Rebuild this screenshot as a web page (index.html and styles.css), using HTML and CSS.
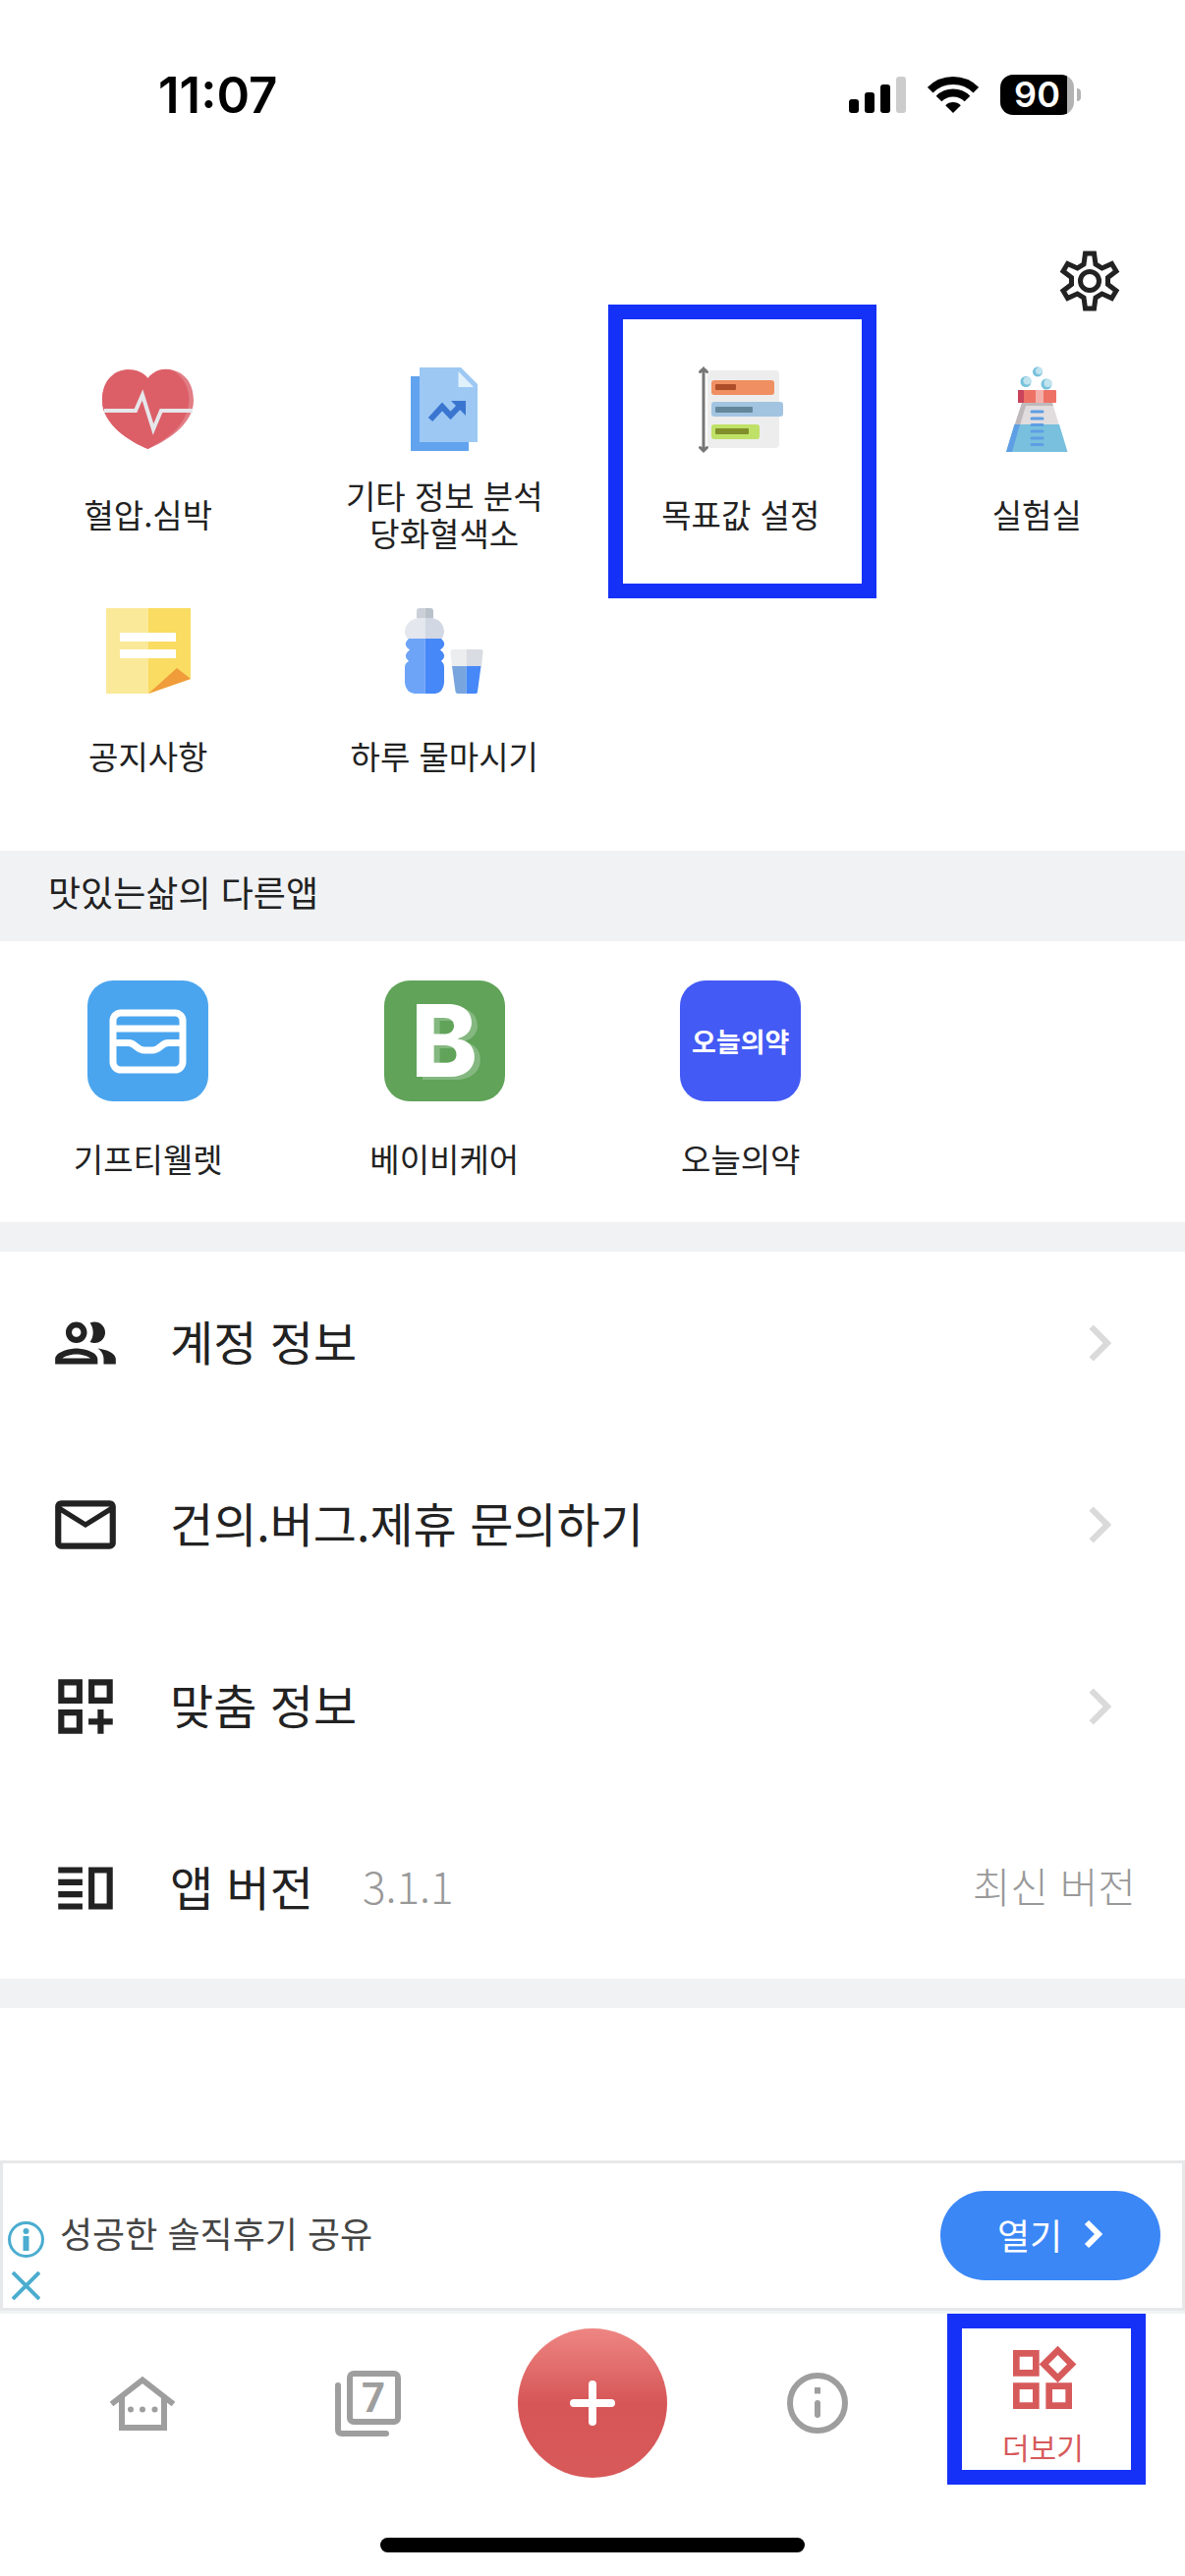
FILE: index.html
```html
<!DOCTYPE html>
<html lang="ko">
<head>
    <meta charset="UTF-8">
    <meta name="viewport" content="width=device-width, initial-scale=1.0">
    <title>더보기</title>
    <link rel="stylesheet" href="styles.css">
</head>
<body>
    <div class="app">
        <!-- Status bar -->
        <div class="status-bar">
            <span class="time">11:07</span>
            <div class="status-icons">
                <svg width="58" height="37" viewBox="0 0 58 37">
                    <rect x="0" y="23" width="10" height="14" rx="3"/>
                    <rect x="16" y="16" width="10" height="21" rx="3"/>
                    <rect x="32" y="8" width="10" height="29" rx="3"/>
                    <rect x="48" y="0" width="10" height="37" rx="3" fill="#cccccc"/>
                </svg>
                <svg width="52" height="37" viewBox="0 0 52 37">
                    <path d="M2.7 13.7A33 33 0 0 1 49.3 13.7" fill="none" stroke="#000" stroke-width="8"/>
                    <path d="M11.5 22.5A20.5 20.5 0 0 1 40.5 22.5" fill="none" stroke="#000" stroke-width="8"/>
                    <path d="M26 37L18.2 29.2A11 11 0 0 1 33.8 29.2Z"/>
                </svg>
                <div class="battery">
                    <span class="battery-level">90</span>
                    <span class="battery-tip"></span>
                </div>
            </div>
        </div>

        <header class="top-actions">
            <button type="button" class="icon-btn" aria-label="설정">
                <svg class="icon" viewBox="0 0 74 74" fill="none">
                    <g fill="none" stroke="currentColor" stroke-width="5">
                        <path d="M32.500 9H41.500L43 20 49.500 24 59.500 19.500 64 27 55.500 33.500V40.500L64 47 59.500 54.500 49.500 50 43 54 41.500 65H32.500L31 54 24.500 50 14.500 54.500 10 47 18.500 40.500V33.500L10 27 14.500 19.500 24.500 24 31 20z"/>
                        <circle cx="37" cy="37" r="9.500"/>
                    </g>
                </svg>
            </button>
        </header>

        <main>
            <nav class="menu-grid">
                <a href="#" class="menu-item">
                    <svg width="96" height="96" viewBox="0 0 96 96">
                        <path fill="#e27d85" d="M47.500 16C59 1 94 3 94 39 94 63 65 81 47.500 88 30 81 1 63 1 39 1 3 36 1 47.500 16z"/>
                        <path fill="#dc5f68" d="M47.500 16C54 8 63 5 73 8 98 24 96 62 56 83L47.500 88C30 81 1 63 1 39 1 3 36 1 47.500 16z"/>
                        <path fill="none" stroke="#e6e7ea" stroke-width="4" d="M3 49H35L42 33 53 68 61 49H93"/>
                    </svg>
                    <span class="menu-label">혈압.심박</span>
                </a>
                <a href="#" class="menu-item">
                    <svg width="96" height="96" viewBox="0 0 96 96">
                        <path fill="#61a3ef" d="M14 14H73V90H14z"/>
                        <path fill="#9dc8f4" d="M23 5H65L82 22V81H23z"/>
                        <path fill="#e0f1fc" d="M62.500 9L78 25H62.500z"/>
                        <path fill="none" stroke="#3a76d0" stroke-width="6" d="M34 58L46 45 54.500 54 65 43"/>
                        <path fill="#3a76d0" d="M55 39H70V54z"/>
                    </svg>
                    <span class="menu-label">기타 정보 분석<br>당화혈색소</span>
                </a>
                <a href="#" class="menu-item marked">
                    <svg width="96" height="96" viewBox="0 0 96 96">
                        <rect x="14" y="8" width="73" height="79" rx="4" fill="#ededed"/>
                        <rect x="18" y="18" width="64" height="15" rx="3" fill="#f08f62"/>
                        <rect x="22" y="22" width="21" height="6" rx="1" fill="#ae4e29"/>
                        <rect x="18" y="40" width="73" height="15" rx="3" fill="#a2c4e1"/>
                        <rect x="22" y="45" width="38" height="6" rx="1" fill="#62879a"/>
                        <rect x="18" y="63" width="49" height="15" rx="3" fill="#bfe168"/>
                        <rect x="22" y="67" width="34" height="6" rx="1" fill="#808e2b"/>
                        <path fill="none" stroke="#767676" stroke-width="3" stroke-linecap="round" d="M10 6V90M6.500 9.500L10 6 13.500 9.500M6.500 86.500L10 90 13.500 86.500"/>
                    </svg>
                    <span class="menu-label">목표값 설정</span>
                </a>
                <a href="#" class="menu-item">
                    <svg width="96" height="96" viewBox="0 0 96 96">
                        <circle cx="37" cy="19.500" r="5.500" fill="#78c2dc"/><circle cx="38.500" cy="18.500" r="4" fill="#bfe3ef"/>
                        <circle cx="49" cy="9.500" r="5" fill="#78c2dc"/><circle cx="50.500" cy="8.500" r="3.500" fill="#bfe3ef"/>
                        <circle cx="58" cy="22" r="5.500" fill="#78c2dc"/><circle cx="59.500" cy="21" r="4" fill="#bfe3ef"/>
                        <path fill="#e1dddf" d="M33 41H64L71 64H25.500z"/>
                        <path fill="#bfb9bc" d="M33 41H64L65 44H37L31 64H25.500z"/>
                        <path fill="#78c0dd" d="M25.500 63H71L79.500 91H17z"/>
                        <path fill="#5e9ee4" d="M25.500 63H31L23 91H17z"/>
                        <rect x="29" y="28" width="39" height="13" rx="1" fill="#ee7165"/>
                        <path fill="#c9435b" d="M29 28H35V41H29z"/>
                        <path fill="#f3b0aa" d="M47 28H55V41H47z"/>
                        <path stroke="#5e9ee4" stroke-width="3" stroke-linecap="round" d="M43 50H54M43 57H54M43 63.500H54M43 70H54M43 77H54M43 83.500H54"/>
                    </svg>
                    <span class="menu-label">실험실</span>
                </a>
                <a href="#" class="menu-item">
                    <svg width="96" height="96" viewBox="0 0 96 96">
                        <path fill="#fbe99a" d="M5 4H48V91H5z"/>
                        <path fill="#f9dc61" d="M48 4H91V76L48 91z"/>
                        <path fill="#f09c3b" d="M48 91L77 65 91 76z"/>
                        <path fill="#fff" d="M19 29H76V38H19zM19 46H76V55H19z"/>
                    </svg>
                    <span class="menu-label">공지사항</span>
                </a>
                <a href="#" class="menu-item">
                    <svg width="96" height="96" viewBox="0 0 96 96">
                        <path fill="#cbd0d8" d="M20 14V7Q20 4 23 4H28.500V14z"/>
                        <path fill="#b9c2ca" d="M28.500 4H34Q37 4 37 7V14H28.500z"/>
                        <path fill="#e4e7ed" d="M28.500 14H21C12 16 8 22 8 29Q9 34 12 36H28.500z"/>
                        <path fill="#d2d8e3" d="M28.500 14H36C45 16 48 22 48 29Q47 34 45 36H28.500z"/>
                        <path fill="#6ea4f8" d="M28.500 35H12Q5 41 13 46.500 5 52 12 58 8 60 8 64V80Q9 90 18 91H28.500z"/>
                        <path fill="#4688f7" d="M28.500 35H45Q52 41 44 46.500 52 52 45 58 48 60 48 64V80Q47 90 39 91H28.500z"/>
                        <path fill="#ebedef" d="M70.500 46H57Q54 46 54.500 49L56 63H70.500z"/>
                        <path fill="#d9dce2" d="M70.500 46H85Q88 46 87.500 49L86 63H70.500z"/>
                        <path fill="#79a5de" d="M56 63H70.500V91H62Q60 91 59.500 89z"/>
                        <path fill="#4688f7" d="M70.500 63H85.500L82 89Q82 91 80 91H70.500z"/>
                    </svg>
                    <span class="menu-label">하루 물마시기</span>
                </a>
            </nav>

            <section>
                <h2 class="section-title">맛있는삶의 다른앱</h2>
                <div class="app-grid">
                    <a href="#" class="app-item">
                        <svg class="app-icon wallet" viewBox="0 0 123 123" fill="none" stroke="#fff" stroke-width="7">
                            <rect x="26" y="33" width="71" height="58" rx="8"/>
                            <path d="M26 49H97M26 63.500H42C49 63.500 50 71 58 71H66C74 71 75 63.500 82 63.500H97"/>
                        </svg>
                        <span>기프티웰렛</span>
                    </a>
                    <a href="#" class="app-item">
                        <span class="app-icon baby">B</span>
                        <span>베이비케어</span>
                    </a>
                    <a href="#" class="app-item">
                        <span class="app-icon medicine">오늘의약</span>
                        <span>오늘의약</span>
                    </a>
                </div>
            </section>

            <ul class="settings">
                <li>
                    <a href="#" class="row">
                        <svg class="icon" viewBox="0 0 24 24"><path d="M9 13.750c-2.340 0-7 1.170-7 3.500V19h14v-1.750c0-2.330-4.660-3.500-7-3.500zM4.340 17c.84-.58 2.870-1.250 4.660-1.250s3.820.67 4.660 1.250H4.340zM9 12c1.930 0 3.500-1.570 3.500-3.500S10.930 5 9 5 5.500 6.570 5.500 8.500 7.070 12 9 12zm0-5c.83 0 1.500.67 1.500 1.500S9.830 10 9 10s-1.500-.67-1.500-1.500S8.170 7 9 7zm7.040 6.810c1.160.84 1.960 1.960 1.960 3.440V19h4v-1.750c0-2.020-3.500-3.170-5.960-3.440zM15 12c1.930 0 3.500-1.570 3.500-3.500S16.930 5 15 5c-.54 0-1.040.13-1.500.35.63.89 1 1.980 1 3.150s-.37 2.260-1 3.150c.46.22.96.35 1.500.35z"/></svg>
                        <span class="row-title">계정 정보</span>
                        <svg class="icon chevron" viewBox="0 0 24 24"><path d="M10 6L8.590 7.410 13.170 12l-4.580 4.590L10 18l6-6z"/></svg>
                    </a>
                </li>
                <li>
                    <a href="#" class="row">
                        <svg class="icon" viewBox="0 0 24 24"><path d="M22 6c0-1.100-.9-2-2-2H4c-1.100 0-2 .9-2 2v12c0 1.100.9 2 2 2h16c1.100 0 2-.9 2-2V6zm-2 0l-8 5-8-5h16zm0 12H4V8l8 5 8-5v10z"/></svg>
                        <span class="row-title">건의.버그.제휴 문의하기</span>
                        <svg class="icon chevron" viewBox="0 0 24 24"><path d="M10 6L8.590 7.410 13.170 12l-4.580 4.590L10 18l6-6z"/></svg>
                    </a>
                </li>
                <li>
                    <a href="#" class="row">
                        <svg class="icon" viewBox="0 0 24 24"><path d="M3 11h8V3H3v8zm2-6h4v4H5V5zm8-2v8h8V3h-8zm6 6h-4V5h4v4zM3 21h8v-8H3v8zm2-6h4v4H5v-4zm13-2h-2v3h-3v2h3v3h2v-3h3v-2h-3v-3z"/></svg>
                        <span class="row-title">맞춤 정보</span>
                        <svg class="icon chevron" viewBox="0 0 24 24"><path d="M10 6L8.590 7.410 13.170 12l-4.580 4.590L10 18l6-6z"/></svg>
                    </a>
                </li>
                <li class="row">
                    <svg class="icon" viewBox="0 0 24 24"><path d="M3 15h8v-2H3v2zm0 4h8v-2H3v2zm0-8h8V9H3v2zm0-6v2h8V5H3zm10 0h8v14h-8V5zm2 2v10h4V7h-4z"/></svg>
                    <span class="row-title">앱 버전</span>
                    <span class="version">3.1.1</span>
                    <span class="row-note">최신 버전</span>
                </li>
            </ul>
        </main>

        <footer>
            <aside class="ad">
                <div class="ad-badges">
                    <button type="button" class="icon-btn" aria-label="광고 정보">
                        <svg width="37" height="37" viewBox="0 0 37 37" fill="none" stroke="#4badcf">
                            <circle cx="18.500" cy="18.500" r="17" stroke-width="3"/>
                            <path stroke-width="6" d="M18.500 15V30"/>
                            <circle cx="18.500" cy="10" r="3" fill="#4badcf" stroke="none"/>
                        </svg>
                    </button>
                    <button type="button" class="icon-btn" aria-label="광고 닫기">
                        <svg width="29" height="29" viewBox="0 0 29 29" fill="none" stroke="#4badcf" stroke-width="4">
                            <path d="M1 1L28 28M28 1L1 28"/>
                        </svg>
                    </button>
                </div>
                <p class="ad-text">성공한 솔직후기 공유</p>
                <button type="button" class="ad-open">
                    열기
                    <svg width="20" height="30" viewBox="0 0 20 30" fill="none" stroke="#fff" stroke-width="6">
                        <path d="M3 3L15 15 3 27"/>
                    </svg>
                </button>
            </aside>

            <nav class="tab-bar">
                <a href="#" class="tab" aria-label="홈">
                    <svg class="icon" viewBox="0 0 74 74">
                        <path fill="none" stroke="currentColor" stroke-width="6" d="M5.500 38L37 13.500 68.500 38M16 30V62H59V30"/>
                        <circle cx="25" cy="43.500" r="3"/><circle cx="37" cy="43.500" r="3"/><circle cx="49.500" cy="43.500" r="3"/>
                    </svg>
                </a>
                <a href="#" class="tab" aria-label="주간 기록">
                    <svg class="icon week" viewBox="0 0 74 74">
                        <g fill="none" stroke="currentColor" stroke-width="6" stroke-linecap="round">
                            <rect x="19" y="7" width="49" height="49" rx="4"/>
                            <path d="M7 19V64Q7 68 11 68H56"/>
                        </g>
                        <text x="43" y="46" text-anchor="middle">7</text>
                    </svg>
                </a>
                <a href="#" class="tab" aria-label="추가">
                    <span class="add-circle">
                        <svg width="48" height="48" viewBox="0 0 48 48" stroke="#fff" stroke-width="8" stroke-linecap="round">
                            <path d="M24 5V43M5 24H43"/>
                        </svg>
                    </span>
                </a>
                <a href="#" class="tab" aria-label="정보">
                    <svg class="icon" viewBox="0 0 74 74">
                        <circle cx="37" cy="37" r="28" fill="none" stroke="currentColor" stroke-width="6"/>
                        <path d="M34 21H40V27.500H34z"/>
                        <path stroke="currentColor" stroke-width="6" stroke-linecap="round" d="M37 37V49"/>
                    </svg>
                </a>
                <a href="#" class="tab active">
                    <svg class="icon" viewBox="0 0 24 24"><path d="M16.660 4.520l2.830 2.830-2.830 2.830-2.830-2.830 2.830-2.830M9 5v4H5V5h4m10 10v4h-4v-4h4M9 15v4H5v-4h4m7.660-13.310L11 7.340 16.660 13l5.660-5.660-5.660-5.650zM11 3H3v8h8V3zm10 10h-8v8h8v-8zm-10 0H3v8h8v-8z"/></svg>
                    <span>더보기</span>
                </a>
            </nav>
            <div class="home-indicator"></div>
        </footer>
    </div>
</body>
</html>
```
FILE: styles.css
```css
* {
    box-sizing: border-box;
}

body {
    margin: 0;
    background-color: #fff;
    color: #222;
    font-family: 'Noto Sans CJK KR', sans-serif;
}

a {
    color: inherit;
    text-decoration: none;
}

svg {
    display: block;
    flex-shrink: 0;
}

button {
    font-family: inherit;
    cursor: pointer;
}

.app {
    display: flex;
    flex-direction: column;
    min-height: 100vh;
}

.icon {
    width: 74px;
    height: 74px;
    fill: currentColor;
}

.icon-btn {
    padding: 0;
    border: none;
    background: none;
    color: inherit;
}

/* Status bar */
.status-bar {
    display: flex;
    justify-content: space-between;
    align-items: center;
    height: 192px;
    padding: 0 106px 0 161px;
    color: #000;
    font-family: Inter, sans-serif;
}

.time {
    font-size: 51px;
    font-weight: 600;
}

.status-icons {
    display: flex;
    align-items: center;
    gap: 22px;
}

.battery {
    display: flex;
    align-items: center;
    gap: 3px;
}

.battery-level {
    width: 75px;
    border-radius: 13px;
    background: linear-gradient(to right, #000 68px, #b3b3b3 68px);
    color: #fff;
    font-size: 36px;
    font-weight: 600;
    line-height: 41px;
    text-align: center;
}

.battery-tip {
    width: 4px;
    height: 13px;
    border-radius: 0 4px 4px 0;
    background-color: #b3b3b3;
}

.top-actions {
    display: flex;
    justify-content: flex-end;
    padding: 57px 60px 22px;
}

/* Feature grid */
.menu-grid {
    display: grid;
    grid-template-columns: repeat(4, 1fr);
    grid-auto-rows: 246px;
    padding-bottom: 29px;
}

.menu-item {
    position: relative;
    display: flex;
    flex-direction: column;
    align-items: center;
    gap: 18px;
    padding-top: 24px;
    font-size: 33px;
    line-height: 38px;
    text-align: center;
}

.menu-label {
    display: flex;
    align-items: center;
    height: 80px;
}

.marked::after,
.active::after {
    content: '';
    position: absolute;
    border: 15px solid #1531f7;
}

.marked::after {
    top: -35px;
    right: 13px;
    bottom: -18px;
    left: 16px;
}

/* Other apps */
.section-title {
    margin: 0;
    padding: 14px 49px 24px;
    background-color: #f1f2f4;
    font-size: 36px;
    font-weight: 400;
    line-height: 54px;
}

.app-grid {
    display: grid;
    grid-template-columns: repeat(4, 1fr);
    padding: 40px 0;
}

.app-item {
    display: flex;
    flex-direction: column;
    align-items: center;
    gap: 34px;
    font-size: 33px;
    line-height: 49px;
}

.app-icon {
    width: 123px;
    height: 123px;
    border-radius: 26px;
}

.wallet {
    background-color: #4ba5ee;
}

.baby {
    background-color: #60a359;
    color: #fff;
    font-family: Inter, sans-serif;
    font-size: 102px;
    font-weight: 800;
    line-height: 123px;
    text-align: center;
    text-shadow: 6px 3px #85b880;
}

.medicine {
    display: flex;
    justify-content: center;
    align-items: center;
    background-color: #435af4;
    color: #fff;
    font-size: 27px;
    font-weight: 700;
}

/* Settings list */
.settings {
    margin: 0;
    padding: 0;
    border-top: 30px solid #f1f2f4;
    border-bottom: 30px solid #f1f2f4;
    list-style: none;
}

.row {
    display: flex;
    align-items: center;
    height: 185px;
    padding: 0 50px;
}

.row-title,
.version,
.row-note {
    padding-bottom: 6px;
}

.row-title {
    margin-left: 49px;
    font-size: 48px;
}

.chevron {
    margin-left: auto;
    color: #dadada;
}

.version,
.row-note {
    color: #999;
    font-size: 42px;
    font-weight: 300;
}

.version {
    margin-left: 50px;
    font-size: 44px;
}

.row-note {
    margin-left: auto;
}

footer {
    margin-top: auto;
}

/* Ad banner */
.ad {
    display: flex;
    align-items: center;
    height: 153px;
    padding: 0 22px 0 5px;
    border: 3px solid #e7e8e9;
}

.ad-badges {
    display: flex;
    flex-direction: column;
    align-items: center;
    align-self: flex-end;
    gap: 14px;
    padding-bottom: 8px;
}

.ad-text {
    flex: 1;
    margin: 0 0 0 16px;
    padding-bottom: 8px;
    color: #444;
    font-size: 36px;
}

.ad-open {
    display: flex;
    justify-content: center;
    align-items: center;
    gap: 22px;
    width: 224px;
    height: 91px;
    padding: 0 0 4px;
    border: none;
    border-radius: 46px;
    background-color: #3b87f6;
    color: #fff;
    font-size: 36px;
}

/* Bottom tabs */
.tab-bar {
    display: grid;
    grid-template-columns: repeat(5, 1fr);
    padding: 0 30px;
    border-top: 3px solid #f1f4f5;
}

.tab {
    position: relative;
    display: flex;
    flex-direction: column;
    justify-content: center;
    align-items: center;
    gap: 8px;
    height: 182px;
    color: #9e9e9e;
    font-size: 30px;
    line-height: 40px;
}

.week {
    font-family: Roboto, sans-serif;
    font-size: 42px;
    font-weight: 700;
}

.add-circle {
    display: flex;
    justify-content: center;
    align-items: center;
    width: 152px;
    height: 152px;
    border-radius: 50%;
    background: linear-gradient(#ee8683, #d65657 50%, #d8595a);
}

.active {
    color: #d75a5b;
}

.active .icon {
    width: 80px;
    height: 80px;
}

.active::after {
    top: 0;
    right: 10px;
    bottom: 8px;
    left: 17px;
}

.home-indicator {
    width: 432px;
    height: 15px;
    margin: 46px auto 24px;
    border-radius: 8px;
    background-color: #000;
}
```
